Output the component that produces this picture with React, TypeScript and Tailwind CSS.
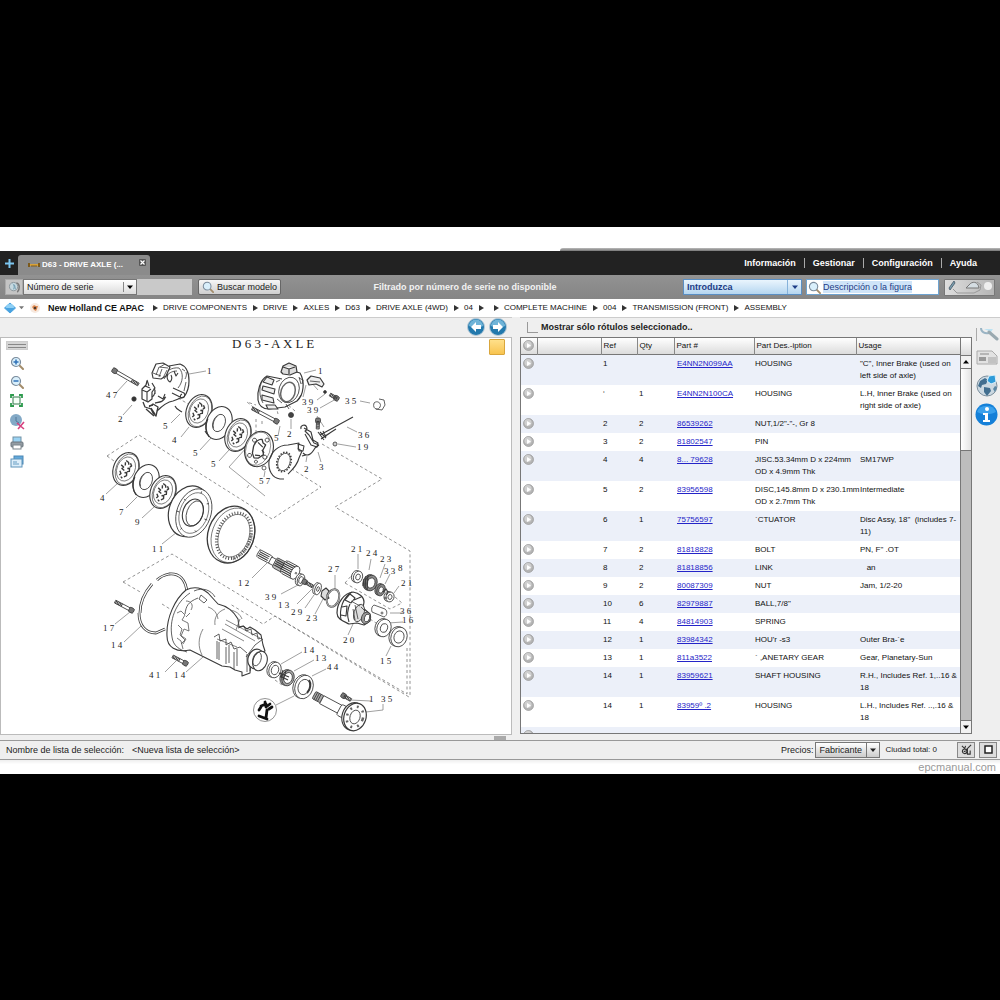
import { useState } from 'react'
import type { ReactNode } from 'react'

const CRUMBS = [
  'DRIVE COMPONENTS', 'DRIVE', 'AXLES', 'D63', 'DRIVE AXLE (4WD)', '04', '',
  'COMPLETE MACHINE', '004', 'TRANSMISSION (FRONT)', 'ASSEMBLY',
]

const MENU = ['Información', 'Gestionar', 'Configuración', 'Ayuda']

type Part = { ref: string; qty: string; part: string; desc: string[]; usage: string[] }

const PARTS: Part[] = [
  { ref: '1', qty: '', part: 'E4NN2N099AA', desc: ['HOUSING'], usage: ['"C", Inner Brake (used on', 'left side of axle)'] },
  { ref: '‘', qty: '1', part: 'E4NN2N100CA', desc: ['HOUSING'], usage: ['L.H, Inner Brake (used on', 'right side of axle)'] },
  { ref: '2', qty: '2', part: '86539262', desc: ['NUT,1/2"-"-, Gr 8'], usage: [] },
  { ref: '3', qty: '2', part: '81802547', desc: ['PIN'], usage: [] },
  { ref: '4', qty: '4', part: '8... 79628', desc: ['JISC.53.34mm D x 224mm', 'OD x 4.9mm Thk'], usage: ['SM17WP'] },
  { ref: '5', qty: '2', part: '83956598', desc: ['DISC,145.8mm D x 230.1mm', 'OD x 2.7mm Thk'], usage: ['Intermediate'] },
  { ref: '6', qty: '1', part: '75756597', desc: ['`CTUATOR'], usage: ['Disc Assy, 18"\u00a0 (includes 7-', '11)'] },
  { ref: '7', qty: '2', part: '81818828', desc: ['BOLT'], usage: ['PN, F" .OT'] },
  { ref: '8', qty: '2', part: '81818856', desc: ['LINK'], usage: ['\u00a0\u00a0\u00a0an'] },
  { ref: '9', qty: '2', part: '80087309', desc: ['NUT'], usage: ['Jam, 1/2-20'] },
  { ref: '10', qty: '6', part: '82979887', desc: ['BALL,7/8"'], usage: [] },
  { ref: '11', qty: '4', part: '84814903', desc: ['SPRING'], usage: [] },
  { ref: '12', qty: '1', part: '83984342', desc: ["HOU'r -s3"], usage: ['Outer Bra-`e'] },
  { ref: '13', qty: '1', part: '811a3522', desc: ['` ,ANETARY GEAR'], usage: ['Gear, Planetary-Sun'] },
  { ref: '14', qty: '1', part: '83959621', desc: ['SHAFT HOUSING'], usage: ['R.H., Includes Ref. 1,..16 &', '18'] },
  { ref: '14', qty: '1', part: '83959º .2', desc: ['HOUSING'], usage: ['L.H., Includes Ref. ..,.16 &', '18'] },
  { ref: '15', qty: '4', part: '20000044', desc: ['BRNG4.5O.D'], usage: ['Propeller, \u00a0coupling'] },
]

// [text, x, baseline]
const LABELS: [string, number, number][] = [
  ['1', 207, 373], ['4 7', 106, 397], ['2', 118, 421], ['5', 163, 428], ['4', 172, 442],
  ['5', 193, 455], ['5', 211, 466], ['4', 100, 500], ['7', 119, 514], ['9', 135, 524],
  ['1', 318, 373], ['3 9', 302, 404], ['3 9', 307, 412], ['3 5', 345, 403], ['3 6', 358, 437],
  ['1 9', 357, 449], ['2', 287, 436], ['2', 304, 471], ['3', 319, 469], ['5 7', 259, 483],
  ['5', 274, 440], ['1 1', 152, 551], ['1 2', 238, 585], ['3 9', 265, 599], ['1 3', 278, 607],
  ['1 7', 103, 630], ['1 4', 111, 647], ['4 1', 149, 677], ['1 4', 174, 677], ['2 1', 351, 551],
  ['2 4', 366, 555], ['2 3', 380, 561], ['3 3', 384, 573], ['8', 398, 570], ['2 1', 401, 585],
  ['2 7', 328, 571], ['2 9', 291, 614], ['2 3', 306, 620], ['3 6', 400, 613], ['1 6', 402, 622],
  ['2 0', 343, 642], ['1 5', 380, 663], ['1 4', 303, 652], ['1 3', 315, 660], ['4 4', 327, 669],
  ['1', 369, 701], ['3 5', 381, 701],
]

const LEADERS =
  'M189 373L206 370M116 392L127 380M123 414L132 404M171 422L180 413M181 436L189 426M200 449L211 437' +
  'M219 460L229 449M106 493L118 482M126 507L137 496M142 517L154 506M162 543L177 531M304 372L316 369' +
  'M317 399L325 393M320 407L336 398M360 400L370 402M347 426L357 431M338 443L356 446M291 428L291 418' +
  'M306 461L307 455M321 461L318 451M278 435L280 425M247 446L229 466L265 495M247 487L249 484M265 470L264 476' +
  'M252 577L267 562M281 593L298 584M297 603L312 588M305 607L314 594M315 613L323 598M335 574V588' +
  'M358 553V568M371 558L369 569M385 563L380 577M390 573L385 583M399 585L394 592M403 612H390M403 621L388 622' +
  'M348 634L353 623M386 655L391 645M302 651L281 663M314 659L294 670M326 668L312 675M276 704L294 695' +
  'M371 700L350 699M383 703V709L366 711M115 623L130 611M124 641L141 625M165 671L176 660M186 671L203 656' +
  'M318 389L310 380M324 426L317 415M303 396L306 384'

const DASHES =
  'M107 455L139 434L272 518L321 486L292 468M107 455L114 460M322 443L382 478L335 506L410 550V695' +
  'M407 647V693L275 615L263 623L230 603M123 581L172 553L409 696M123 581L142 592M162 603L170 608' +
  'M345 582L352 574M345 582L390 608L402 602L395 596M258 410L247 401L256 404M276 405L278 413M256 418V434M262 420V424' +
  'M295 410L286 402M178 397L190 404M255 545L262 550M370 618L379 624M275 679L282 684'

function Disc({ x, y, hub }: { x: number; y: number; hub?: boolean }) {
  return (
    <g transform={`translate(${x} ${y}) rotate(22)`}>
      <ellipse rx="12.5" ry="17" fill="#fff" strokeWidth="1.1" />
      {hub ? (
        <>
          <path d="M-4 16.500C-9 14-12 7-12 0" strokeWidth="1.200" />
          <ellipse rx="6" ry="9" />
          <path d="M-4-6A6 9 0 0 0-3 7" strokeWidth=".7" />
        </>
      ) : (
        <>
          <ellipse cx="1" rx="11" ry="16" strokeWidth=".6" />
          <ellipse rx="9" ry="12.500" strokeWidth=".6" />
          <path d="M-3-8l3 1 1 2M-3-6l1 3M2-7l2 2-1 2M-6-2l3 1-1 2 3 1M1-1l2-1 1 3-2 1M-5 4l2 2-1 2M0 4l2-1 1 3-2 2M-2 9l2 1" strokeWidth="1.400" />
        </>
      )}
    </g>
  )
}

function Ring({ x, y, rx, ry, inner = 0.55, fill = '#fff', rot = 18 }: {
  x: number; y: number; rx: number; ry: number; inner?: number; fill?: string; rot?: number
}) {
  return (
    <g transform={`translate(${x} ${y}) rotate(${rot})`}>
      <ellipse cx="-2" rx={rx} ry={ry} fill={fill} />
      <ellipse rx={rx} ry={ry} fill={fill} />
      <ellipse rx={rx * inner} ry={ry * inner} fill="#fff" />
    </g>
  )
}

function Bolt({ x, y, len, angle }: { x: number; y: number; len: number; angle: number }) {
  return (
    <g transform={`translate(${x} ${y}) rotate(${angle})`}>
      <rect y="-1.5" width={len} height="3" fill="#fff" />
      <rect x="-3" y="-2.5" width="5" height="5" rx="1.5" fill="#777" />
      <path d={`M${len - 8} 0H${len}`} strokeWidth="3" strokeDasharray="1 .6" />
    </g>
  )
}

function AxleDrawing() {
  return (
    <svg viewBox="32 337 450 396" className="block h-auto w-full overflow-visible" fill="none" stroke="#3a3a3a" strokeWidth=".8" strokeLinejoin="round" role="img" aria-label="D63-AXLE">
      <path d={DASHES} stroke="#777" strokeWidth=".8" strokeDasharray="3 2.5" />
      <path d={LEADERS} stroke="#777" strokeWidth=".7" />

      {/* left brake housing */}
      <g>
        <path d="M169 365l11-2c6 2 9 9 9 17 0 7-2 12-5 16-5 1-7 3-11 4-6 1-11 5-16 10" strokeWidth="1.200" />
        <path d="M161 377c4-7 11-11 18-10 5 5 4 14-1 20M164 378c4-6 8-8 13-8" />
        <path d="M152 372l4-9 7-1 7 4-4 9-5 3-8-1z" fill="#fff" strokeWidth="1.200" />
        <path d="M156 374l3-8 9 1M159 376l3-8M163 377l4-8M160 366l5-3M153 372l8 3" />
        <path d="M173 387l11 5c2 2 0 5-2 5l-10-5M182 393c-2 1-2 3-1 4" strokeWidth="1.100" />
        <path d="M186 371c1 3 0 5-1 7M186 381l-2 9M182 368l3 2" />
        <path d="M147 380l-1 4-4 4v10l6 3 4-3v-7l3-4-3-5" fill="#fff" strokeWidth="1.200" />
        <path d="M142 389l5 2v9M147 391l4-3M145 385l5 2M147 379l2 6M154 387c2 3 1 7-2 9M155 389v4" strokeWidth="1.100" />
        <path d="M168 373c-2 4 0 7 2 8 2-2 2-5 1-7M174 370l2 5 2-3M158 395l5 3 2-5M166 396l-4 2" strokeWidth="1.100" />
        <path d="M143 401l2 5 6 2 2 4 3 3 2-9-5-3-4 3M146 408l8 7M151 407l4 6M149 405l4-1M155 402c5-1 8-1 10-5" strokeWidth="1.300" />
        <path d="M175 405c1 3 4 4 7 6M205 430c2 4 5 6 9 6" strokeWidth="1.100" />
        <circle cx="134" cy="398" r="2.200" fill="#333" />
      </g>
      <Bolt x={115} y={370} len={27} angle={30} />

      <Disc x={199} y={410} />
      <Disc x={219} y={422} hub />
      <Disc x={238} y={434} />
      {/* actuator plate */}
      <g transform="translate(259 448) rotate(18)">
        <ellipse rx="14" ry="18" fill="#fff" strokeWidth="1.100" />
        <ellipse cx="-1" rx="12" ry="17" strokeWidth=".5" />
        <path d="M-6-1c0-5 3-9 6-9l2 3 3 1-1 6 2 4-4 5-4 1-3-4z" strokeWidth="1.300" />
        <circle cx="-7" cy="-7" r="2" /><circle cx="5" cy="-11" r="2" /><circle cx="8" cy="6" r="2" />
        <circle cx="-7" cy="9" r="2" /><circle cx="1" cy="13" r="1.5" /><path d="M-3-6l6 3M-2 7l5-1M3 0l3 2" strokeWidth="1.200" />
      </g>
      <path d="M269 460c2-9 9-16 19-16l11-2-1 6 4 2-3 7c-2 8-8 13-11 16M269 460c-1 9 3 17 11 18h4" strokeWidth="1.100" />
      <ellipse cx="284" cy="461" rx="7" ry="10" transform="rotate(18 284 461)" strokeWidth="1.500" strokeDasharray="1.500 1.500" />
      <ellipse cx="284" cy="461" rx="6" ry="9" transform="rotate(18 284 461)" />
      <path d="M298 443l6 2-1 5h-4zM303 452c4 4 8 2 12-5l4-3M302 455l4-1" strokeWidth="1.100" />
      <circle cx="264" cy="467" r="2" />

      {/* right brake housing */}
      <g>
        <path d="M282 378l-15-3c-7 4-10 15-9 24 1 6 5 9 11 9l16-2 12-6c7-6 8-20 3-28l-7-2" fill="#fff" strokeWidth="1.200" />
        <ellipse cx="289" cy="389" rx="10" ry="13" transform="rotate(18 289 389)" fill="#fff" />
        <ellipse cx="288" cy="391" rx="7" ry="10" transform="rotate(18 288 391)" strokeWidth="1.500" stroke="#666" />
        <path d="M281 371l2-6 6-3 7 3 1 6-7 3-7-1zM283 366l6 2 6-2M289 368v5" fill="#ddd" strokeWidth="1.200" />
        <path d="M267 376l7 3-2 5-9-3zM263 385l12 3-1 5-12-4zM262 394l11 3 1 5-12-3zM266 404h9l3 4h-10z" fill="#eee" strokeWidth="1.100" />
        <path d="M262 380c-3 7-3 15 1 22M299 376l2 7M297 400l4-6M286 403l3 5M276 381l4-2M277 398l5 4" />
        <path d="M307 379l4-4 9 2 4 6-2 3-6-3-7 1z" fill="#eee" strokeWidth="1.200" />
        <path d="M310 380l10 1M299 377l4 2-1 4" />
        <circle cx="325" cy="391" r="1.400" fill="#333" />
        <circle cx="291" cy="414" r="2.500" fill="#444" />
      </g>
      <Bolt x={336} y={397} len={7} angle={210} />
      <Bolt x={276} y={420} len={27} angle={208} />
      <Bolt x={318} y={420} len={8} angle={92} />
      <path d="M301 428a3 3 0 1 1 4 2l4 4 5 8 5 2M304 427l7 4 2 8 5 3-1 4-6-2-6-11M320 434l33-18M322 437l14-9M318 431l6 8M320 431l6 6M323 430l3 6M321 438l9-6" strokeWidth="1.100" />
      <circle cx="335" cy="443" r="2" fill="#ccc" />
      <path d="M374 402c3-3 8 0 6 4s-8 2-6-4M376 408l6 1 3-5-1-5-5-1" />

      {/* middle clutch pack */}
      <Disc x={126} y={468} />
      <Disc x={146} y={480} hub />
      <Disc x={163} y={491} />
      <g transform="translate(191 511) rotate(20)">
        <ellipse cx="-2" rx="20" ry="26" fill="#fff" strokeWidth="1.200" />
        <ellipse cx="3" rx="17" ry="25" fill="#fff" />
        <ellipse cx="3" rx="14" ry="21" strokeWidth=".6" />
        <ellipse cx="2" rx="10" ry="14" fill="#fff" strokeWidth="1.100" />
        <ellipse cx="4" rx="8" ry="13" />
        <path d="M3-23v2M14-14l-2 1M18 2h-3M12 17l-2-1M-4 20l1-2M-11-10l2 1M-14 4h3" />
      </g>
      <g transform="translate(232 534) rotate(20)">
        <ellipse cx="-1" rx="23" ry="29" fill="#fff" strokeWidth="1.300" />
        <ellipse cx="1" rx="21" ry="28" strokeWidth=".6" />
        <ellipse cx="2" rx="16.500" ry="23.500" strokeWidth="3" strokeDasharray="1 1.800" stroke="#555" />
        <ellipse cx="2" rx="15" ry="22" strokeWidth=".6" />
        <path d="M18-8a18 25 0 0 1-9 30" strokeWidth="3" strokeDasharray=".8 1.200" stroke="#666" />
      </g>

      {/* input shaft */}
      <g transform="translate(258 552) rotate(28)" fill="#fff">
        <rect y="-4" width="15" height="8" rx="2" />
        <rect x="14" y="-3" width="7" height="7" />
        <rect x="19" y="-5" width="13" height="11" rx="2" fill="#bbb" />
        <rect x="28" y="-7" width="16" height="14" rx="3" />
        <path d="M1-2h11M1 0h11M1 2h11M20-3h11M20-1h11M20 1h11M20 3h11M29-5h12M29-3h12M29-1h12M29 1h12M29 3h12M29 5h12" strokeWidth="1.100" />
        <ellipse cx="42" rx="4" ry="7" /><circle cx="43" cy="0" r=".8" />
      </g>
      <Ring x={301} y={579} rx={3.5} ry={6} inner={0.6} />
      <Bolt x={305} y={581} len={9} angle={30} />
      <Ring x={318} y={588} rx={3} ry={6} inner={0.4} />
      <path d="M322 590l4-3 3 3-2 4 2 3-4 2-4-4z" fill="#ddd" strokeWidth="1.100" />
      <ellipse cx="333" cy="597" rx="6" ry="9" transform="rotate(18 333 597)" strokeWidth="2" stroke="#555" />
      <ellipse cx="333" cy="597" rx="6" ry="9" transform="rotate(18 333 597)" strokeWidth=".5" stroke="#fff" />

      {/* differential */}
      <Ring x={358} y={576} rx={4.5} ry={6} inner={0.5} />
      <Ring x={371} y={582} rx={6} ry={8} inner={0.65} fill="#888" />
      <path d="M364 578l-1 7M366 575l-1 12M368 574l-1 15" strokeWidth="1.200" />
      <Ring x={381} y={589} rx={4} ry={6} fill="#888" />
      <Ring x={390} y={596} rx={4} ry={5} inner={0.5} />
      <path d="M383 591l3-3 2 3-2 3M384 597h3" strokeWidth="1.200" />
      <g>
        <path d="M337 612c0-10 7-20 16-21 6 1 11 5 11 10l-1 6 7 6v7l-6 4-7-2-8 1c-6-3-12-5-12-11z" fill="#fff" strokeWidth="1.200" />
        <path d="M352 591c-9 5-13 17-11 28M345 599l5-6 5 4-4 5zM342 606l5-1-1 10-5-1M354 599l7-3M350 603c-3 6-3 12-1 18" strokeWidth="1.100" />
        <ellipse cx="359" cy="612" rx="5" ry="9" transform="rotate(18 359 612)" fill="#ddd" />
        <ellipse cx="366" cy="617" rx="4.500" ry="6" transform="rotate(18 366 617)" fill="#999" />
        <ellipse cx="367" cy="617" rx="2.500" ry="4" transform="rotate(18 367 617)" fill="#fff" />
        <path d="M355 604l3 14M353 608l2 11M361 606l4 4M351 600l9 5" />
        <path d="M374 604l11 4c3 2 2 7-1 8l-12-5c-1-3 0-6 2-7z" fill="#fff" /><circle cx="382" cy="612" r="1" />
      </g>
      <Ring x={384} y={627} rx={7} ry={9} inner={0.5} />
      <Ring x={399} y={636} rx={8} ry={10} inner={0.62} />

      {/* snap ring: two thin strokes with gaps */}
      <path d="M187 592c-1-14-8-20-18-19-5 1-9 3-12 6M152 583c-7 8-12 18-12 29M139 612c0 13 7 20 17 20l9-4" strokeWidth="2.800" />
      <path d="M187 592c-1-14-8-20-18-19-5 1-9 3-12 6M152 583c-7 8-12 18-12 29M139 612c0 13 7 20 17 20l9-4" strokeWidth="1.200" stroke="#fff" />

      {/* axle housing */}
      <g>
        <path d="M186 589c8-4 16-2 22 3l10 11c9 2 16 8 20 15l1 8 4-1 4 3 3-2 5 3 6 5 2 10 2 6-14 6-1 16-8 3v-4l-7-2-5-3-8-1-12-6-20-10c-14 3-23-3-23-14-1-18 8-37 19-46z" fill="#fff" strokeWidth="1.100" />
        <path d="M190 592c-15 10-21 28-18 44 1 9 8 13 15 15M194 590c9-4 17-1 21 6M198 597c-10 4-12 8-13 16M201 594l6 5-3 3-5-4z" />
        <path d="M181 610l4 4-3 5 6 3 1 8-5-2-3 7 4 4-4 4M186 616l4-4M178 624l4 4-2 6 6 4-3 5M177 637l4 3 2 8M186 600c5 0 8 4 5 9M177 612l4-2" stroke="#555" />
        <path d="M203 628c-5 9-5 18-1 26M225 608c-8 3-11 9-10 16M208 606c6 2 9 6 10 12M226 619l34 18M225 623l30 17M217 638l20 8M222 628l22 12M240 618l-4 11M230 609c6 1 10 4 12 9" strokeWidth=".7" stroke="#555" />
        <path d="M217 640v18M219 641v18M226 646v17M229 644v18M234 651v17M237 648v17M247 653v18M250 656v14M214 636l5-3 1 7 6-2v6l5-3 3 7 6-2 7 6" />
        <path d="M238 627l6-2 2 5 5-2 1 6 5-2 1 6 4-1M246 656l9-12 8-6" />
        <ellipse cx="256" cy="658" rx="8" ry="10" transform="rotate(18 256 658)" fill="#fff" strokeWidth="1.200" />
        <ellipse cx="260" cy="660" rx="7" ry="10" transform="rotate(18 260 660)" fill="#fff" strokeWidth="1.100" />
        <ellipse cx="257" cy="658" rx="4" ry="7" transform="rotate(18 257 658)" />
      </g>
      <Bolt x={131} y={609} len={18} angle={208} />
      <Bolt x={185} y={662} len={14} angle={208} />

      {/* output shaft */}
      <Ring x={275} y={669} rx={6} ry={8} inner={0.6} />
      <Ring x={288} y={677} rx={6} ry={8} inner={0.7} fill="#aaa" />
      <path d="M279 672l10 4M280 675l8 4M283 669l-2 8M286 670l-3 9" strokeWidth="1.100" />
      <Ring x={304} y={686} rx={9} ry={12} inner={0.65} />
      <path d="M307 692c4-4 4-10 2-13" strokeWidth="2" />
      <g transform="translate(314 694) rotate(28)" fill="#fff">
        <rect y="-4" width="9" height="8" rx="1" fill="#aaa" />
        <path d="M2-4v8M4-4v8M6-4v8" />
        <rect x="9" y="-4" width="30" height="9" />
        <rect x="29" y="-5" width="8" height="12" rx="2" />
      </g>
      <g transform="translate(355 716) rotate(18)">
        <ellipse cx="-2" rx="11" ry="14" fill="#fff" strokeWidth="1.100" />
        <ellipse rx="11" ry="14" fill="#fff" strokeWidth="1.200" />
        <ellipse rx="5" ry="7" />
        <ellipse rx="8" ry="10.500" strokeWidth="2.500" strokeDasharray="2 5" stroke="#666" />
      </g>
      <Bolt x={344} y={695} len={8} angle={30} />
      <circle cx="265" cy="709" r="11.500" fill="#fff" stroke="#777" />
      <path d="M259 715l8 3M266 717l1-8M259 709l2-3M261 705l5-2M265 701l1 5 4-3M269 708l3-2" strokeWidth="2.800" strokeLinecap="round" stroke="#111" />

      <g fill="#222" stroke="none" fontFamily="'Liberation Serif', serif">
        <text x="232" y="347" fontSize="13" xmlSpace="preserve">D 6 3 - A X L E</text>
        {LABELS.map(([t, x, y]) => (
          <text key={`${x}-${y}`} x={x} y={y} fontSize="9">{t}</text>
        ))}
      </g>
    </svg>
  )
}

function Magnifier({ sign, size = 'size-[14px]' }: { sign?: '+' | '-'; size?: string }) {
  return (
    <svg viewBox="0 0 14 14" className={size} fill="none">
      <path d="M9 9l4 4" stroke="#a38c6a" strokeWidth="2" strokeLinecap="round" />
      <circle cx="6" cy="6" r="4.500" fill="#d9effb" stroke="#7a8b9c" strokeWidth="1.2" />
      {sign && <path d={sign === '+' ? 'M3.500 6h5M6 3.500v5' : 'M3.500 6h5'} stroke="#2f72b8" strokeWidth="1.5" />}
    </svg>
  )
}

function ToolButton({ label, children }: { label: string; children: ReactNode }) {
  return <button aria-label={label} className="flex size-[16px] items-center justify-center">{children}</button>
}

function RowArrow() {
  return (
    <svg viewBox="0 0 11 11" className="block size-[11px]">
      <circle cx="5.500" cy="5.500" r="5" fill="#b4b4b4" stroke="#979797" strokeWidth=".7" />
      <circle cx="5" cy="4.500" r="3.500" fill="#d0d0d0" />
      <path d="M4 3v5l4-2.500z" fill="#fff" />
    </svg>
  )
}

function Caret({ className = 'size-[6px]' }: { className?: string }) {
  return <svg viewBox="0 0 6 6" className={className}><path d="M0 1.500h6L3 5z" fill="currentColor" /></svg>
}

function NavArrow({ back }: { back?: boolean }) {
  return (
    <button aria-label={back ? 'Anterior' : 'Siguiente'} className="size-[18px]">
      <svg viewBox="0 0 18 18">
        <circle cx="9" cy="9" r="8.500" fill="#2379ad" stroke="#b8cbd8" />
        <path d="M2 8a7 6.500 0 0 1 14 0c-4 2-9 2-14 0z" fill="#70b4d8" />
        <path d={back ? 'M4 9l5-5v3h5v4H9v3z' : 'M14 9L9 4v3H4v4h5v3z'} fill="#fff" />
      </svg>
    </button>
  )
}

function TabBar() {
  return (
    <div className="flex h-[24px] items-end bg-[#222] text-white">
      <button aria-label="Nueva pestaña" className="flex h-full w-[18px] items-center justify-center pt-[2px]">
        <svg viewBox="0 0 9 9" className="size-[9px]"><path d="M4.500 0v9M0 4.500h9" stroke="#7cc6f0" strokeWidth="2" /></svg>
      </button>
      <div className="flex h-[20px] w-[132px] items-center rounded-t-[3px] bg-[#8b8b8b] pl-[10px]">
        <svg viewBox="0 0 12 6" className="mr-[2px] h-[6px] w-[12px]">
          <path d="M1 3h10" stroke="#d8a23a" strokeWidth="2" /><path d="M1 1v4M11 1v4" stroke="#7c5a1c" strokeWidth="2" /><path d="M3 4h6" stroke="#7c5a1c" />
        </svg>
        <span className="text-[8px] leading-[12px] font-bold">D63 - DRIVE AXLE (...</span>
        <button aria-label="Cerrar pestaña" className="mr-[4px] mb-[4px] ml-auto flex size-[7px] items-center justify-center rounded-[1px] bg-[#555]">
          <svg viewBox="0 0 5 5" className="size-[5px]"><path d="M.5.5l4 4M4.500.5l-4 4" stroke="#fff" strokeWidth="1.200" /></svg>
        </button>
      </div>
      <nav className="mr-[15px] ml-auto flex h-full items-center divide-x divide-[#aaa] pt-px text-[9px] leading-[10px] font-bold">
        {MENU.map((m) => <a key={m} href="#" className="px-[8px]">{m}</a>)}
      </nav>
    </div>
  )
}

function SearchBar() {
  const [figure, setFigure] = useState('Descripción o la figura')
  return (
    <div className="flex h-[24px] items-center bg-gradient-to-b from-[#929292] to-[#858585] px-[5px] pt-px text-[9px] leading-[12px]">
      <button aria-label="Identificar" className="flex h-[16px] w-[18px] items-center justify-center border border-[#aaa] bg-[#c4c4c4]">
        <svg viewBox="0 0 14 14" className="size-[13px]" fill="none">
          <circle cx="6" cy="6" r="4.500" fill="#c6d8df" stroke="#8a9499" /><path d="M5 3c2 1 2 4 1 6M7 4l1 5" stroke="#6d9ab0" /><path d="M9 2c4 1 4 7 1 10" stroke="#777" strokeWidth="1.500" />
        </svg>
      </button>
      <div className="relative h-[16px] w-[114px] border border-[#777] bg-gradient-to-b from-white to-[#dcdcdc]">
        <select aria-label="Criterio" className="h-full w-full appearance-none pl-[3px] leading-[12px] text-[#222]">
          <option>Número de serie</option>
        </select>
        <span className="pointer-events-none absolute inset-y-[2px] right-0 flex w-[13px] items-center justify-center border-l border-[#888]"><Caret /></span>
      </div>
      <input aria-label="Número de serie" className="h-[16px] w-[55px] bg-[#c9c9c9]" />
      <button className="ml-[6px] flex h-[16px] items-center gap-[3px] rounded-[2px] border border-[#666] bg-gradient-to-b from-[#f6f6f6] to-[#cfcfcf] px-[3px] text-[#222]">
        <Magnifier size="size-[12px]" />
        Buscar modelo
      </button>
      <p className="flex-1 pr-[34px] text-center font-bold text-[#f2f2f2]">Filtrado por número de serie no disponible</p>
      <div className="relative h-[16px] w-[119px] border border-[#5a8fc4] bg-gradient-to-b from-[#eaf5fd] to-[#b5d6f0] text-[#1d3c86]">
        <select aria-label="Introduzca" className="h-full w-full appearance-none pl-[3px] leading-[12px] font-bold">
          <option>Introduzca</option>
        </select>
        <span className="pointer-events-none absolute inset-y-0 right-0 flex w-[14px] items-center justify-center border-l border-[#86b2da]"><Caret /></span>
      </div>
      <div className="ml-[4px] flex h-[16px] w-[133px] items-center gap-[2px] border border-[#6ea3d0] bg-white pl-px">
        <Magnifier size="size-[13px]" />
        <input aria-label="Descripción o la figura" value={figure} onChange={(e) => setFigure(e.target.value)} className="field-sizing-content h-[12px] bg-[#cfe4f8] text-[#1d3c86]" />
      </div>
      <button aria-label="Borrar búsqueda" className="ml-[5px] h-[17px] w-[51px] rounded-[1px] border border-[#777] bg-gradient-to-r from-[#dedede] to-[#b5b5b5]">
        <svg viewBox="0 0 49 15" className="h-[15px] w-[49px]" fill="none">
          <path d="M4 8l5-7 1 2-5 7z" fill="#7ba0b0" stroke="#456" strokeWidth=".8" />
          <path d="M8 9l4 4h17l6-3 1-5-4-3" stroke="#999" /><path d="M21 8h13c-1-7-7-7-10-3z" stroke="#777" fill="#d5dde2" />
          <circle cx="43" cy="6" r="4" fill="#eee" />
        </svg>
      </button>
    </div>
  )
}

function Breadcrumb() {
  return (
    <nav aria-label="Ruta" className="flex h-[18px] items-center bg-white pl-[4px] text-[#111]">
      <button aria-label="Inicio" className="flex items-center">
        <svg viewBox="0 0 12 12" className="size-[12px]"><path d="M6 1l5.500 5-5.500 5-5.500-5z" fill="#4aa3e0" stroke="#4aa3e0" strokeLinejoin="round" /><path d="M2 6a4 4 0 0 1 8 0z" fill="#8fd0f5" /></svg>
        <Caret className="ml-[3px] size-[5px] text-[#777]" />
      </button>
      <svg viewBox="0 0 12 12" className="ml-[5px] size-[12px]">
        <circle cx="6" cy="6" r="5" fill="#f7e9df" /><path d="M3 5l2-2 2 1 2 0-1 3-1 2-2-1z" fill="#e08a50" /><circle cx="6" cy="6" r="1.300" fill="#4d3a2d" />
      </svg>
      <ol className="ml-[7px] flex items-center gap-[6px] text-[8px] leading-[12px] whitespace-nowrap">
        <li className="mr-[3px] text-[9px] font-bold"><a href="#">New Holland CE APAC</a></li>
        {CRUMBS.map((c, i) => (
          <li key={i} className="flex min-w-[9px] items-center gap-[5px]">
            <svg viewBox="0 0 5 6" className="h-[6px] w-[5px]"><path d="M0 0l5 3-5 3z" fill="#333" /></svg>
            {c && <a href="#">{c}</a>}
          </li>
        ))}
      </ol>
    </nav>
  )
}

function DiagramPanel() {
  return (
    <section className="flex min-w-0 flex-col">
      <div className="flex h-[20px] items-center justify-end gap-[4px] border-t border-[#ccc] pr-[5px]">
        <NavArrow back />
        <NavArrow />
      </div>
      <div className="grid grid-cols-[31px_1fr_29px] border border-[#bbb] bg-white">
        <div className="flex flex-col items-center gap-[3px] pt-[3px]">
          <div className="mb-[2px] h-[9px] w-[22px] border border-[#ccc] bg-[#d5d5d5] px-px py-[2px]">
            <div className="h-[4px] border-y border-[#888]" />
          </div>
          <ToolButton label="Acercar"><Magnifier sign="+" /></ToolButton>
          <ToolButton label="Alejar"><Magnifier sign="-" /></ToolButton>
          <ToolButton label="Ajustar">
            <svg viewBox="0 0 13 13" className="size-[13px]" fill="none">
              <path d="M1 4V1h3M9 1h3v3M12 9v3H9M4 12H1V9" stroke="#2e9b4e" strokeWidth="1.800" /><rect x="3" y="3" width="7" height="7" stroke="#357a4c" fill="#f5fff7" />
            </svg>
          </ToolButton>
          <div className="mt-[2px]">
            <ToolButton label="Ocultar puntos">
              <svg viewBox="0 0 16 16" className="size-[16px]">
                <circle cx="7" cy="6" r="6" fill="#83a9c6" /><path d="M7 3v4l3 2" stroke="#52789a" fill="none" /><path d="M8 9l7 6M15 8l-6 7" stroke="#d5417e" strokeWidth="1.600" />
              </svg>
            </ToolButton>
          </div>
          <div className="mt-[2px]">
            <ToolButton label="Imprimir">
              <svg viewBox="0 0 14 14" className="size-[14px]">
                <rect x="3" y="1" width="8" height="6" fill="#9bd3f3" stroke="#7292a5" /><rect x="1" y="6" width="12" height="5" rx="1" fill="#949da4" stroke="#6b757d" /><rect x="3" y="9" width="8" height="4" fill="#fff" stroke="#7b858b" />
              </svg>
            </ToolButton>
          </div>
          <ToolButton label="Notas">
            <svg viewBox="0 0 14 14" className="size-[14px]">
              <rect x="4" y="1" width="9" height="8" fill="#62a9dc" stroke="#4c87b4" /><rect x="1" y="4" width="11" height="8" fill="#ddeefa" stroke="#5f94ba" /><path d="M3 7h4M3 9h6" stroke="#679dc2" />
            </svg>
          </ToolButton>
        </div>
        <AxleDrawing />
        <div className="flex justify-center pt-[1px]">
          <button aria-label="Nota" className="h-[16px] w-[16px] rounded-[1px] border border-[#d9a63c] bg-gradient-to-b from-[#ffe08a] to-[#f8c44e]" />
        </div>
      </div>
    </section>
  )
}

function PartsTable() {
  const head = 'border-r border-[#888] pl-[2px] text-left font-normal'
  return (
    <div className="flex h-[397px] border border-[#777] bg-white">
      <div className="min-w-0 flex-1 overflow-hidden">
        <table className="w-full table-fixed border-collapse text-[8px] leading-[12px] whitespace-nowrap text-[#111]">
          <colgroup>
            <col className="w-[16px]" /><col className="w-[64px]" /><col className="w-[36px]" /><col className="w-[37px]" />
            <col className="w-[80px]" /><col className="w-[102px]" /><col />
          </colgroup>
          <thead>
            <tr className="h-[17px] border-b border-[#777] bg-gradient-to-b from-white to-[#dcdcdc]">
              <th className="border-r border-[#888] pl-[2px]"><RowArrow /></th>
              <th className="border-r border-[#888]" />
              <th className={head}>Ref</th>
              <th className={head}>Qty</th>
              <th className={head}>Part #</th>
              <th className={head}>Part Des.-iption</th>
              <th className="pl-[2px] text-left font-normal">Usage</th>
            </tr>
          </thead>
          <tbody>
            {PARTS.map((p, i) => (
              <tr key={i} className="align-top odd:bg-[#ecf0f9]">
                <td className="pt-[3px] pl-[2px]"><button aria-label={`Detalle ${p.part}`} className="block"><RowArrow /></button></td>
                <td />
                <td className="py-[3px] pl-[2px]">{p.ref}</td>
                <td className="py-[3px] pl-[2px]">{p.qty}</td>
                <td className="py-[3px] pl-[3px]"><a href="#" className="text-[#2424c8] underline">{p.part}</a></td>
                <td className="py-[3px] pl-px">
                  {p.desc.map((d) => <div key={d}>{d}</div>)}
                </td>
                <td className="py-[3px] pl-[4px]">
                  {p.usage.map((u) => <div key={u}>{u}</div>)}
                </td>
              </tr>
            ))}
          </tbody>
        </table>
      </div>
      <div className="flex w-[11px] flex-col border-l border-[#777] bg-[#bdbdbd]">
        <div className="h-[18px] border-b border-[#777] bg-gradient-to-b from-white to-[#dcdcdc]" />
        <button aria-label="Subir" className="flex h-[13px] items-center justify-center border-b border-[#777] bg-[#f2f2f2]"><Caret className="size-[6px] rotate-180" /></button>
        <div className="h-[82px] border-b border-[#777] bg-gradient-to-r from-white to-[#e4e4e4]" />
        <button aria-label="Bajar" className="mt-auto flex h-[13px] items-center justify-center border-t border-[#777] bg-[#f2f2f2]"><Caret /></button>
      </div>
    </div>
  )
}

function SideTools() {
  return (
    <div className="flex flex-col items-end gap-[5px] pr-[2px] pt-[10px]">
      <button aria-label="Buscar" className="h-[13px] w-[22px] border-l border-[#aaa]">
        <svg viewBox="0 0 22 13" className="h-[13px] w-[22px]" fill="none">
          <path d="M4 0c0 4 4 6 8 5" stroke="#9ab4c4" strokeWidth="2" /><path d="M7 1h9l-2 3z" fill="#bde2f2" /><path d="M12 4l8 7" stroke="#9aa9b0" strokeWidth="3" strokeLinecap="round" />
        </svg>
      </button>
      <button aria-label="Tarjeta" className="mt-[4px] h-[15px] w-[22px]">
        <svg viewBox="0 0 22 15" className="h-[15px] w-[22px]">
          <path d="M1 1h15l5 5v8H1z" fill="#e2e2e2" stroke="#aaa" /><path d="M4 4h9" stroke="#888" /><rect x="3" y="7" width="7" height="4" fill="#999" /><path d="M12 7h8v6h-8z" fill="#c2c2c2" />
        </svg>
      </button>
      <button aria-label="Web" className="mt-[5px] size-[22px]">
        <svg viewBox="0 0 22 22">
          <circle cx="11" cy="11" r="10" fill="#cbd8e1" stroke="#7c8f9d" /><path d="M4 6l5-3 3 2-2 4-4 1-1 3-3-2zM8 12l6 1 1 3-4 5-3-4z" fill="#426e8f" />
          <path d="M13 1l6-1 1 7-5 2-4-3z" fill="#2f9bd8" stroke="#d9effa" /><path d="M17 14l2-3 2 1-2 5z" fill="#5c87a3" />
        </svg>
      </button>
      <button aria-label="Información" className="mt-px size-[23px]">
        <svg viewBox="0 0 23 23">
          <circle cx="11.500" cy="11.500" r="11" fill="#1580d8" /><path d="M2 9a10 9 0 0 1 19 0c-6 3-13 3-19 0z" fill="#3aa0ec" />
          <circle cx="12" cy="6" r="2" fill="#fff" /><path d="M8 10h5v7h2v2H8v-2h2v-5H8z" fill="#fff" />
        </svg>
      </button>
    </div>
  )
}

function PartsPanel() {
  const [onlySelected, setOnlySelected] = useState(false)
  return (
    <section className="grid min-w-0 grid-cols-[1fr_28px] border-t border-[#ccc]">
      <div className="min-w-0">
        <label className="flex h-[19px] items-center gap-[3px] pl-[7px] text-[9px] leading-[12px] font-bold text-[#222]">
          <input
            type="checkbox" checked={onlySelected} onChange={(e) => setOnlySelected(e.target.checked)}
            className="size-[11px] appearance-none border-b border-l border-[#999] checked:bg-[#888]"
          />
          Mostrar sólo rótulos seleccionado..
        </label>
        <PartsTable />
      </div>
      <SideTools />
    </section>
  )
}

function StatusBar() {
  return (
    <footer className="flex h-[20px] items-center border-y border-[#999] bg-[#efefef] pr-[3px] pl-[6px] text-[9px] leading-[12px] text-[#222]">
      <span>Nombre de lista de selección:</span>
      <span className="ml-[8px]">&lt;Nueva lista de selección&gt;</span>
      <label htmlFor="precios" className="mr-[2px] ml-auto">Precios:</label>
      <div className="relative h-[16px] w-[65px] border border-[#777] bg-gradient-to-b from-white to-[#ccc]">
        <select id="precios" className="h-full w-full appearance-none pl-[3px] leading-[12px]"><option>Fabricante</option></select>
        <span className="pointer-events-none absolute inset-y-0 right-0 flex w-[13px] items-center justify-center border-l border-[#777]"><Caret /></span>
      </div>
      <span className="mr-[20px] ml-[5px] text-[8px]">Ciudad total: 0</span>
      <button aria-label="Lista" className="flex h-[16px] w-[18px] items-center justify-center border border-[#888] bg-[#ddd]">
        <svg viewBox="0 0 12 12" className="size-[11px]" fill="none" stroke="#333" strokeWidth="1.200"><circle cx="4" cy="8" r="2.500" /><path d="M1 2l3 3 1-3M5 7l6-6M7 5v6h3V7M3 8h2" /></svg>
      </button>
      <button aria-label="Maximizar" className="ml-[4px] flex h-[16px] w-[18px] items-center justify-center border border-[#888] bg-[#ddd]">
        <svg viewBox="0 0 9 9" className="size-[9px]"><rect x="1" y="1" width="7" height="7" fill="#fff" stroke="#222" strokeWidth="1.500" /></svg>
      </button>
    </footer>
  )
}

export default function App() {
  return (
    <div className="flex min-h-screen flex-col justify-center bg-black font-['Liberation_Sans',sans-serif]">
      <main className="bg-white">
        <div className="flex h-[24px] items-end justify-end">
          <div className="h-[3px] w-[44%] rounded-tl-[4px] bg-gradient-to-b from-[#bbb] to-[#777]" />
        </div>
        <TabBar />
        <SearchBar />
        <Breadcrumb />
        <div className="bg-[#efefef]">
          <div className="grid grid-cols-[512fr_480fr] gap-[8px]">
            <DiagramPanel />
            <PartsPanel />
          </div>
          <div className="flex h-[5px] items-end justify-center">
            <div className="h-[4px] w-[12px] bg-[#aaa]" />
          </div>
        </div>
        <StatusBar />
        <div className="flex h-[14px] items-center justify-end bg-gradient-to-b from-[#eee] to-white to-30% pr-[4px] text-[11px] leading-[12px] text-[#999]">
          epcmanual.com
        </div>
      </main>
    </div>
  )
}
